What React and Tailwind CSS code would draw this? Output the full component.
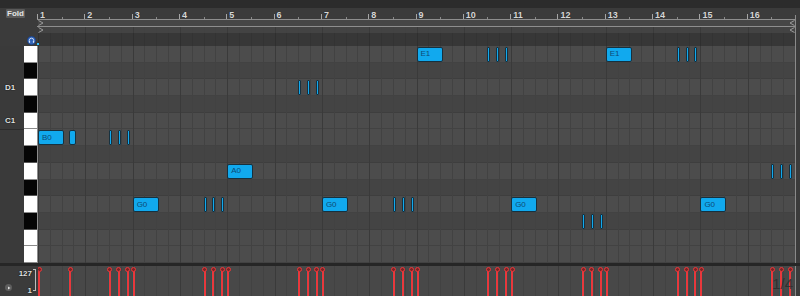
import React from "react";

const BAR = 757 / 16;
const SIX = BAR / 16;
const ROW = 217 / 13;

const KEYS = [
  { n: "E1", b: false },
  { n: "D#1", b: true },
  { n: "D1", b: false, label: true },
  { n: "C#1", b: true },
  { n: "C1", b: false, label: true, oct: true },
  { n: "B0", b: false },
  { n: "A#0", b: true },
  { n: "A0", b: false },
  { n: "G#0", b: true },
  { n: "G0", b: false },
  { n: "F#0", b: true },
  { n: "F0", b: false },
  { n: "E0", b: false },
];

const LONG = [
  { bar: 1, row: 5, label: "B0", trip: 5 },
  { bar: 3, row: 9, label: "G0", trip: 9 },
  { bar: 5, row: 7, label: "A0", trip: 2 },
  { bar: 7, row: 9, label: "G0", trip: 9 },
  { bar: 9, row: 0, label: "E1", trip: 0 },
  { bar: 11, row: 9, label: "G0", trip: 10 },
  { bar: 13, row: 0, label: "E1", trip: 0 },
  { bar: 15, row: 9, label: "G0", trip: 7 },
];

function buildNotes() {
  const notes = [];
  LONG.forEach((l) => {
    const s = (l.bar - 1) * BAR;
    notes.push({ x: s, w: 26, row: l.row, label: l.label });
    if (l.bar === 1) notes.push({ x: s + 31.4, w: 6.4, row: 5 });
    [24, 27, 30].forEach((k) => notes.push({ x: s + k * SIX, w: 3, row: l.trip, thin: true }));
  });
  return notes;
}
const NOTES = buildNotes();

function BeatLines({ dark }) {
  return (
    <div className="absolute inset-0 flex pointer-events-none">
      {Array.from({ length: 16 }).map((_, i) => (
        <div
          key={i}
          className={
            dark
              ? "flex-1 flex border-l border-[#2f2f2f]"
              : "flex-1 flex border-l border-[#3a3a3a]"
          }
        >
          {[0, 1, 2, 3].map((j) => (
            <div
              key={j}
              className={
                j === 0
                  ? "flex-1"
                  : dark
                  ? "flex-1 border-l border-[#333333]"
                  : "flex-1 border-l border-[#424242]"
              }
            />
          ))}
        </div>
      ))}
    </div>
  );
}

function Marker({ right }) {
  return (
    <svg width="6" height="6" viewBox="0 0 6 6">
      {right ? (
        <path d="M5.5 0.5 L1 3 L5.5 5.5" fill="none" stroke="#9a9a9a" strokeWidth="1" />
      ) : (
        <path d="M0.5 0.5 L5 3 L0.5 5.5" fill="none" stroke="#9a9a9a" strokeWidth="1" />
      )}
    </svg>
  );
}

export default function App() {
  return (
    <div className="w-[800px] h-[296px] overflow-hidden bg-[#3b3b3b] flex flex-col font-['Liberation_Sans',Arial,sans-serif] select-none">
      <div className="h-[8px] bg-[#2c2c2c] shrink-0" />

      <div className="h-[38px] flex shrink-0">
        <div className="w-[37px] flex flex-col justify-between pl-[6px] pt-[1px] pr-[1px] pb-[1px]">
          <div className="w-[19px] h-[9px] bg-[#5a5a5a] rounded-[1px] text-[8px] leading-[9px] font-bold text-[#e4e4e4] text-center">
            Fold
          </div>
          <div className="self-end w-[9px] h-[9px]">
            <svg width="9" height="9" viewBox="0 0 9 9">
              <circle cx="4.5" cy="4.5" r="4.2" fill="#2f62b8" stroke="#1a3a75" strokeWidth="0.6" />
              <path d="M2.3 5.6 V4.4 A2.2 2.2 0 0 1 6.7 4.4 V5.6" fill="none" stroke="#d7e2f5" strokeWidth="0.9" />
              <rect x="1.9" y="5" width="1.2" height="1.8" fill="#d7e2f5" />
              <rect x="5.9" y="5" width="1.2" height="1.8" fill="#d7e2f5" />
            </svg>
          </div>
        </div>
        <div className="w-[1px]" />
        <div className="w-[757px] flex flex-col relative">
          <div className="h-[11px] flex">
            {Array.from({ length: 16 }).map((_, i) => (
              <div key={i} className="flex-1 relative">
                <div className="absolute left-[-1px] top-[6px] bottom-0 w-px bg-[#a5a5a5]" />
                <div className="absolute left-1/2 top-[9px] bottom-0 w-px bg-[#8a8a8a]" />
                <div className="absolute left-[2px] top-[3px] text-[9px] leading-none font-bold text-[#d6d6d6] [text-shadow:0_0_1px_#222]">
                  {i + 1}
                </div>
              </div>
            ))}
          </div>
          <div className="h-px bg-[#8e8e8e] ml-[-1px]" />
          <div className="h-[6px] bg-[#464646] flex justify-between items-center">
            <Marker />
            <Marker right />
          </div>
          <div className="h-px bg-[#8e8e8e] ml-[-1px]" />
          <div className="h-[6px] bg-[#434343] relative flex justify-between items-center">
            <BeatLines />
            <div className="relative flex"><Marker /></div>
            <div className="relative flex"><Marker right /></div>
          </div>
          <div className="h-[13px] bg-[#373737] relative">
            <BeatLines dark />
            <div className="absolute left-[-1px] bottom-[1px] w-[2px] h-[2px] bg-[#33c4ff]" />
          </div>
        </div>
        <div className="w-[5px] flex flex-col">
          <div className="h-[7px]" />
          <div className="flex-1 border-l border-[#8a8a8a]" />
        </div>
      </div>

      <div className="h-[217px] flex shrink-0">
        <div className="w-[24px] flex flex-col bg-[#3a3a3a]">
          {KEYS.map((k, i) => (
            <div
              key={i}
              className={
                k.oct
                  ? "flex-1 flex items-center pl-[5px] border-b border-[#2c2c2c]"
                  : "flex-1 flex items-center pl-[5px]"
              }
            >
              {k.label && (
                <span className="text-[8px] leading-none font-bold text-[#e2e2e2] [text-shadow:0_0_1px_#111,0_0_1px_#111]">
                  {k.n}
                </span>
              )}
            </div>
          ))}
        </div>
        <div className="w-[14px] flex flex-col border-r border-[#8c8c8c] bg-[#555555]">
          {KEYS.map((k, i) => (
            <div
              key={i}
              className={
                k.b
                  ? "flex-1 bg-[#050505] border-b border-[#555555]"
                  : "flex-1 bg-white border-b border-[#8a8a8a]"
              }
            />
          ))}
        </div>
        <div className="w-[757px] relative overflow-hidden">
          <div className="absolute inset-0 flex flex-col">
            {KEYS.map((k, i) => (
              <div
                key={i}
                className={
                  k.b
                    ? "flex-1 bg-[#444444] border-b border-[#3e3e3e]"
                    : "flex-1 bg-[#4c4c4c] border-b border-[#424242]"
                }
              />
            ))}
          </div>
          <BeatLines />
          {NOTES.map((n, i) =>
            n.thin ? (
              <div
                key={i}
                className="absolute rounded-[1px] border border-[#17313f] bg-[#11a9ee]"
                style={{ left: n.x, top: n.row * ROW + 1, width: n.w, height: ROW - 2 }}
              />
            ) : (
              <div
                key={i}
                className="absolute rounded-[2px] border border-[#17313f] bg-[#11a9ee] flex items-center pl-[3px] text-[8px] leading-none text-[#0d4a75]"
                style={{ left: n.x, top: n.row * ROW + 1, width: n.w, height: ROW - 2 }}
              >
                {n.label || ""}
              </div>
            )
          )}
        </div>
        <div className="w-[5px] border-l border-[#8a8a8a]" />
      </div>

      <div className="h-[3px] bg-[#262626] shrink-0" />

      <div className="flex-1 flex">
        <div className="w-[38px] relative">
          <div className="absolute right-[6px] top-[4px] text-[8px] leading-none font-bold text-[#e0e0e0] [text-shadow:0_0_1px_#111,0_0_1px_#111]">
            127
          </div>
          <div className="absolute right-[6px] top-[21px] text-[8px] leading-none font-bold text-[#e0e0e0] [text-shadow:0_0_1px_#111,0_0_1px_#111]">
            1
          </div>
          <div className="absolute left-[33px] top-[3px] w-[3px] h-[22px] border-t border-b border-r border-[#bdbdbd]" />
          <div className="absolute left-[5px] top-[18px] w-[7px] h-[7px] rounded-full bg-[#5e5e5e] flex items-center justify-center">
            <svg width="4" height="4" viewBox="0 0 4 4">
              <path d="M1 0.5 L3.5 2 L1 3.5 Z" fill="#dedede" />
            </svg>
          </div>
        </div>
        <div className="w-[757px] relative overflow-hidden bg-[#484848]">
          <BeatLines />
          {NOTES.map((n, i) => (
            <React.Fragment key={i}>
              <div
                className="absolute top-[3px] bottom-0 w-[2px] bg-[#e8383c] shadow-[-1px_0_0_#2c5454]"
                style={{ left: n.x }}
              />
              <div
                className="absolute top-[1px] w-[5px] h-[5px] rounded-full border border-[#e8383c] bg-[#7a2424]"
                style={{ left: n.x - 1.5 }}
              />
            </React.Fragment>
          ))}
          <div className="absolute right-[2px] bottom-[5px] text-[15px] leading-none text-[#2a2a2a]/80">
            1/4
          </div>
        </div>
        <div className="w-[5px] border-l border-[#8a8a8a]" />
      </div>
    </div>
  );
}
